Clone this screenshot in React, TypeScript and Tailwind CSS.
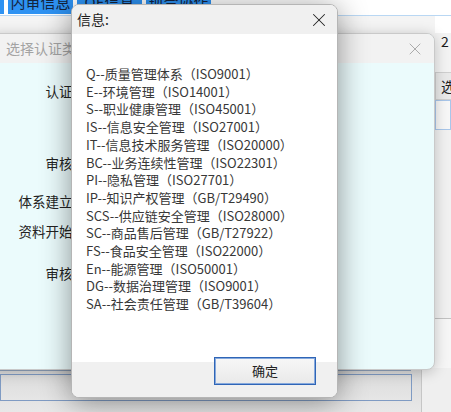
import { X } from 'lucide-react'

const lines = [
  'Q--质量管理体系（ISO9001）',
  'E--环境管理（ISO14001）',
  'S--职业健康管理（ISO45001）',
  'IS--信息安全管理（ISO27001）',
  'IT--信息技术服务管理（ISO20000）',
  'BC--业务连续性管理（ISO22301）',
  'PI--隐私管理（ISO27701）',
  'IP--知识产权管理（GB/T29490）',
  'SCS--供应链安全管理（ISO28000）',
  'SC--商品售后管理（GB/T27922）',
  'FS--食品安全管理（ISO22000）',
  'En--能源管理（ISO50001）',
  'DG--数据治理管理（ISO9001）',
  'SA--社会责任管理（GB/T39604）',
]

export default function App() {
  return (
    <div className="relative w-[451px] h-[412px] overflow-hidden bg-[#f4f4f4] font-['Noto_Sans_CJK_SC',sans-serif]">
      {/* Main app behind the dialogs */}
      <div className="flex flex-col h-full">
        {/* Tabs */}
        <div className="flex items-start gap-[4px] h-[16px] bg-white border-b border-[#b9d7f3]">
          <div className="w-[4px] h-[14px] bg-[#2e92f2]" />
          {['内审信息', 'QE信息', '现合协作'].map((t) => (
            <div key={t} className="w-[65px] h-[14px] bg-[#2e92f2] overflow-hidden flex justify-center">
              <span className="text-[15px] leading-[18px] -mt-[7px] text-[#13233d]">{t}</span>
            </div>
          ))}
        </div>

        {/* Middle area */}
        <div className="flex-1 flex">
          <div className="flex-1" />
          <div className="w-[16px] flex flex-col bg-[#f3f3f3]">
            <div className="h-[17px] bg-white" />
            <div className="h-[39px] pl-[6px] text-[14px] leading-[16px] text-[#1a1a1a]">2</div>
            <div className="h-[28px] bg-[#e9e9e9] border-y border-l border-[#cfcfcf] pl-[5px] text-[14px] leading-[26px] text-[#222]">选</div>
            <div className="h-[30px] border border-[#a8c6ea] bg-[#f7f7f7]" />
            <div className="h-[189px] bg-[#f1f1f1] border-b border-[#c2c2c2]" />
            <div className="flex-1 bg-[#f6f6f6]" />
          </div>
        </div>

        {/* Bottom area */}
        <div className="h-[44px] flex">
          <div className="w-[422px] border-r border-[#c6c6c6] bg-gradient-to-b from-[#d9d9d9] to-[#e8e8e8] flex flex-col">
            <div className="h-[2px]" />
            <div className="w-[411px] border-t border-[#8fa2bb]" />
            <div className="mt-[3px] w-[412px] h-[27px] border border-[#7f9bc3] bg-gradient-to-b from-[#dcdcdc] to-[#e6e6e6]" />
          </div>
          <div className="flex-1 bg-[#efefef]" />
        </div>
      </div>

      {/* Background window: 选择认证类型 */}
      <div className="absolute left-[-12px] top-[33px] w-[447px] h-[337px] rounded-lg overflow-hidden border border-[#c9c9c9] bg-[#ebfbfc] shadow-[0_2px_14px_rgba(0,0,0,0.22)] flex flex-col">
        <div className="h-[29px] bg-[#f2f2f2] flex items-center justify-between pl-[17px] pr-[9px]">
          <span className="text-[14px] text-[#a3a3a3]">选择认证类型</span>
          <X className="w-[20px] h-[20px] text-[#9c9c9c]" strokeWidth={1} />
        </div>
        <div className="flex flex-col text-[13.5px] leading-[20px] text-[#222]">
          <div className="w-[124px] text-right mt-[18px]">认证类型：</div>
          <div className="w-[124px] text-right mt-[52px]">审核类型：</div>
          <div className="w-[124px] text-right mt-[18px]">体系建立时间：</div>
          <div className="w-[124px] text-right mt-[10px]">资料开始时间：</div>
          <div className="w-[124px] text-right mt-[22px]">审核时间：</div>
        </div>
      </div>

      {/* Message dialog: 信息 */}
      <div className="absolute left-[71px] top-[4px] w-[267px] h-[394px] rounded-lg overflow-hidden border border-[#b5b5b5] bg-white shadow-[0_4px_30px_rgba(0,0,0,0.42)] flex flex-col">
        <div className="h-[29px] bg-[#f0f0f0] flex items-center justify-between pl-[5px] pr-[7px]">
          <span className="text-[14px] text-[#1c1c1c]">信息:</span>
          <X className="w-[22px] h-[22px] text-[#222]" strokeWidth={1.1} />
        </div>
        <div className="flex-1 pt-[31px] pl-[14px] text-[13px] leading-[17.7px] text-[#383838]">
          {lines.map((l) => (
            <div key={l} className="whitespace-nowrap">{l}</div>
          ))}
        </div>
        <div className="h-[35px] bg-[#f0f0f0] flex justify-end pr-[21px]">
          <button className="-mt-[5px] w-[102px] h-[28px] border border-[#2f65b6] shadow-[inset_0_0_0_1px_#86a9dd] bg-gradient-to-b from-[#f7f7f7] to-[#e9e9e9] text-[13px] text-[#222]">
            确定
          </button>
        </div>
      </div>
    </div>
  )
}
